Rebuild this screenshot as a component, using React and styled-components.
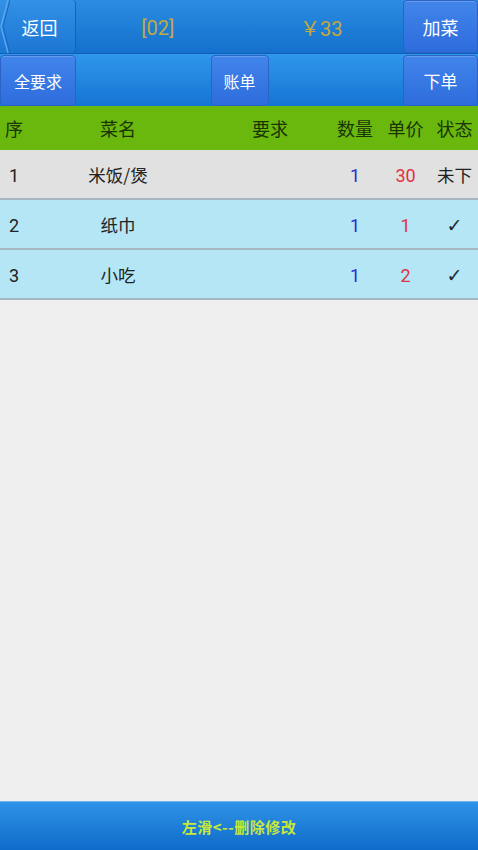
import React from "react";
import styled, { createGlobalStyle } from "styled-components";

const Global = createGlobalStyle`
  html, body { margin: 0; padding: 0; background: #efefef; }
  body { font-family: "Noto Sans CJK SC", "Noto Sans", Roboto, sans-serif; }
  #root { min-height: 100vh; }
`;

const Page = styled.div`
  width: 478px;
  height: 850px;
  display: flex;
  flex-direction: column;
  background: #efefef;
  overflow: hidden;
`;

const TopBar = styled.div`
  height: 53px;
  display: flex;
  background: linear-gradient(#2b8ce2, #1470cc);
  border-bottom: 1px solid #0f5fb4;
`;

const BackButton = styled.div`
  position: relative;
  width: 76px;
  display: flex;
  align-items: center;
  justify-content: center;
  padding-left: 4px;
  box-sizing: border-box;
  color: #fff;
  font-size: 18px;
  background: linear-gradient(#3391e6, #1b76d2);
  border-right: 1px solid #1560b8;
  border-radius: 0 4px 4px 0;
`;

const Chevron = styled.svg`
  position: absolute;
  left: 0;
  top: 0;
`;

const Titles = styled.div`
  flex: 1;
  display: grid;
  grid-template-columns: 1fr 1fr;
  align-items: center;
  justify-items: center;
`;

const TitleText = styled.span`
  color: #c4a93c;
  font-family: Roboto, "Noto Sans CJK SC", sans-serif;
  font-size: 20px;
  padding-top: 2px;
`;

const BlueButton = styled.div`
  width: ${(p) => p.$w}px;
  display: flex;
  align-items: center;
  justify-content: center;
  color: #fff;
  font-size: ${(p) => p.$fs || 17}px;
  background: linear-gradient(#4185ea, #2e6cdc);
  border: 1px solid #2a62c6;
  border-radius: 4px;
  box-sizing: border-box;
  box-shadow: inset 0 1px 0 rgba(255, 255, 255, 0.18);
`;

const ActionBar = styled.div`
  height: 52px;
  display: flex;
  justify-content: space-between;
  background: linear-gradient(#2f97ec, #1674d2);
  padding: 1px 0 0;
  box-sizing: border-box;
`;

const HeaderRow = styled.div`
  height: 44px;
  display: grid;
  grid-template-columns: 26px 184px 120px 50px 51px 1fr;
  align-items: center;
  background: #6ab80e;
  color: #1a3404;
  font-size: 18px;
`;

const Cell = styled.div`
  text-align: ${(p) => (p.$left ? "left" : "center")};
  padding-left: ${(p) => (p.$left ? p.$pad : 0)}px;
  color: ${(p) => p.$color || "inherit"};
  white-space: nowrap;
`;

const Row = styled.div`
  height: 48px;
  display: grid;
  grid-template-columns: 26px 184px 120px 50px 51px 1fr;
  align-items: center;
  background: ${(p) => p.$bg};
  border-bottom: 2px solid #a7b7c2;
  color: #222;
  font-size: 17.5px;
`;

const Num = styled.span`
  font-family: Roboto, "Noto Sans", sans-serif;
  font-size: 18px;
`;

const Check = styled.span`
  font-family: "DejaVu Sans", sans-serif;
  font-size: 19px;
  font-weight: bold;
  color: #1e2a30;
`;

const Spacer = styled.div`
  flex: 1;
`;

const Footer = styled.div`
  height: 48px;
  display: flex;
  align-items: center;
  justify-content: center;
  background: linear-gradient(#2f93e8, #0f6bc8);
  border-top: 1px solid #6fb4ee;
  color: #c6e83a;
  font-size: 15px;
  font-weight: bold;
  letter-spacing: 0.5px;
`;

const rows = [
  { no: 1, name: "米饭/煲", qty: 1, price: 30, status: "未下", bg: "#e1e1e1" },
  { no: 2, name: "纸巾", qty: 1, price: 1, status: "check", bg: "#b4e6f6" },
  { no: 3, name: "小吃", qty: 1, price: 2, status: "check", bg: "#b4e6f6" },
];

export default function App() {
  return (
    <Page>
      <Global />
      <TopBar>
        <BackButton>
          <Chevron width="10" height="53" viewBox="0 0 10 53">
            <path d="M8 0 L1 26.5 L8 53" fill="none" stroke="#5aa6ec" strokeWidth="1.5" />
            <path d="M10 0 L3 26.5 L10 53" fill="none" stroke="#1a66c0" strokeWidth="1" />
          </Chevron>
          返回
        </BackButton>
        <Titles>
          <TitleText>[02]</TitleText>
          <TitleText>￥33</TitleText>
        </Titles>
        <BlueButton $w={75} $fs={18}>加菜</BlueButton>
      </TopBar>
      <ActionBar>
        <BlueButton $w={76} $fs={16}>全要求</BlueButton>
        <BlueButton $w={58} $fs={16}>账单</BlueButton>
        <BlueButton $w={75} $fs={17}>下单</BlueButton>
      </ActionBar>
      <HeaderRow>
        <Cell $left $pad={5}>序</Cell>
        <Cell>菜名</Cell>
        <Cell>要求</Cell>
        <Cell>数量</Cell>
        <Cell>单价</Cell>
        <Cell>状态</Cell>
      </HeaderRow>
      {rows.map((r) => (
        <Row key={r.no} $bg={r.bg}>
          <Cell $left $pad={9}><Num>{r.no}</Num></Cell>
          <Cell>{r.name}</Cell>
          <Cell />
          <Cell $color="#2a2ad0"><Num>{r.qty}</Num></Cell>
          <Cell $color="#e0323f"><Num>{r.price}</Num></Cell>
          <Cell>{r.status === "check" ? <Check>✓</Check> : r.status}</Cell>
        </Row>
      ))}
      <Spacer />
      <Footer>左滑&lt;--删除修改</Footer>
    </Page>
  );
}
